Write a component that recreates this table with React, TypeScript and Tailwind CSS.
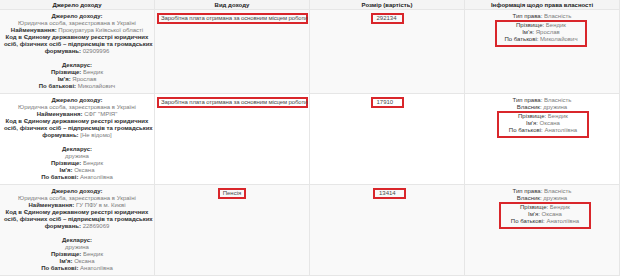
import React from 'react';

type Row = {
  name: string;
  code: string;
  decl: string | null;
  first: string;
  middle: string;
  kind: string;
  amount: string;
  owner: string | null;
  striped: boolean;
};

const rows: Row[] = [
  {
    name: 'Прокуратура Київської області',
    code: '02909996',
    decl: null,
    first: 'Ярослав',
    middle: 'Миколайович',
    kind: 'Заробітна плата отримана за основним місцем роботи',
    amount: '292134',
    owner: null,
    striped: true,
  },
  {
    name: 'СФГ "МРІЯ"',
    code: '[Не відомо]',
    decl: 'дружина',
    first: 'Оксана',
    middle: 'Анатоліївна',
    kind: 'Заробітна плата отримана за основним місцем роботи',
    amount: '17910',
    owner: 'дружина',
    striped: false,
  },
  {
    name: 'ГУ ПФУ в м. Києві',
    code: '22869069',
    decl: 'дружина',
    first: 'Оксана',
    middle: 'Анатоліївна',
    kind: 'Пенсія',
    amount: '13414',
    owner: 'дружина',
    striped: true,
  },
];

const B: React.FC<{ children: React.ReactNode }> = ({ children }) => (
  <span className="font-bold text-[#2e2e2e]">{children}</span>
);

const V: React.FC<{ children: React.ReactNode }> = ({ children }) => (
  <span className="text-[#7c7c7c]">{children}</span>
);

const cell = 'border-r border-b border-[#e6e6e6] px-[4px] py-[3px] text-center';

export default function App() {
  return (
    <div
      className="w-[620px] h-[278px] overflow-hidden bg-white text-[6px] leading-[7px] text-[#444] whitespace-nowrap"
      style={{ fontFamily: '"Liberation Sans", Arial, sans-serif' }}
    >
      <div className="grid grid-cols-[155px_155px_155px_155px]">
        {['Джерело доходу', 'Вид доходу', 'Розмір (вартість)', 'Інформація щодо права власності'].map((h) => (
          <div
            key={h}
            className="h-[10px] border-r border-b border-[#e6e6e6] bg-[#f4f4f4] text-center font-bold leading-[10px] text-[#222]"
          >
            {h}
          </div>
        ))}

        {rows.map((r, i) => {
          const bg = r.striped ? 'bg-[#f9f9f9]' : 'bg-white';
          return (
            <React.Fragment key={i}>
              <div className={`${cell} ${bg}`}>
                <B>Джерело доходу:</B>
                <br />
                <V>Юридична особа, зареєстрована в Україні</V>
                <br />
                <B>Найменування: </B>
                <V>{r.name}</V>
                <br />
                <B>Код в Єдиному державному реєстрі юридичних</B>
                <br />
                <B>осіб, фізичних осіб – підприємців та громадських</B>
                <br />
                <B>формувань: </B>
                <V>{r.code}</V>
                <br />
                <br />
                <B>Декларус:</B>
                <br />
                {r.decl && (
                  <>
                    <V>{r.decl}</V>
                    <br />
                  </>
                )}
                <B>Прізвище: </B>
                <V>Бендик</V>
                <br />
                <B>Ім'я: </B>
                <V>{r.first}</V>
                <br />
                <B>По батькові: </B>
                <V>{r.middle}</V>
              </div>

              <div className={`${cell} ${bg} !px-[2px]`}>
                <span
                  className={`inline-block border-2 border-[#d9262b] text-[#4a4a4a] ${
                    r.kind === 'Пенсія' ? 'px-[3px]' : 'w-[151px] pl-[2px] text-left tracking-[-0.12px]'
                  }`}
                >
                  {r.kind}
                </span>
              </div>

              <div className={`${cell} ${bg}`}>
                <span
                  className={`inline-block w-[33px] border-2 border-[#d9262b] pl-[4px] text-left text-[#4a4a4a] ${
                    i === 2 ? 'ml-[5px]' : ''
                  }`}
                >
                  {r.amount}
                </span>
              </div>

              <div className={`${cell} ${bg}`}>
                <div>
                  <span className="text-[#333]">Тип права: </span>
                  <V>Власність</V>
                </div>
                {r.owner && (
                  <div>
                    <span className="text-[#333]">Власник: </span>
                    <V>{r.owner}</V>
                  </div>
                )}
                <div
                  className={`mx-auto w-[92px] border-2 border-[#d9262b] pb-[2px] ${
                    i === 0 ? '-translate-x-[1px]' : i === 1 ? 'translate-x-[1px]' : 'translate-x-[3px]'
                  }`}
                >
                  <div>
                    <span className="text-[#333]">Прізвище: </span>
                    <V>Бендик</V>
                  </div>
                  <div>
                    <span className="text-[#333]">Ім'я: </span>
                    <V>{r.first}</V>
                  </div>
                  <div>
                    <span className="text-[#333]">По батькові: </span>
                    <V>{r.middle}</V>
                  </div>
                </div>
              </div>
            </React.Fragment>
          );
        })}
      </div>
    </div>
  );
}
